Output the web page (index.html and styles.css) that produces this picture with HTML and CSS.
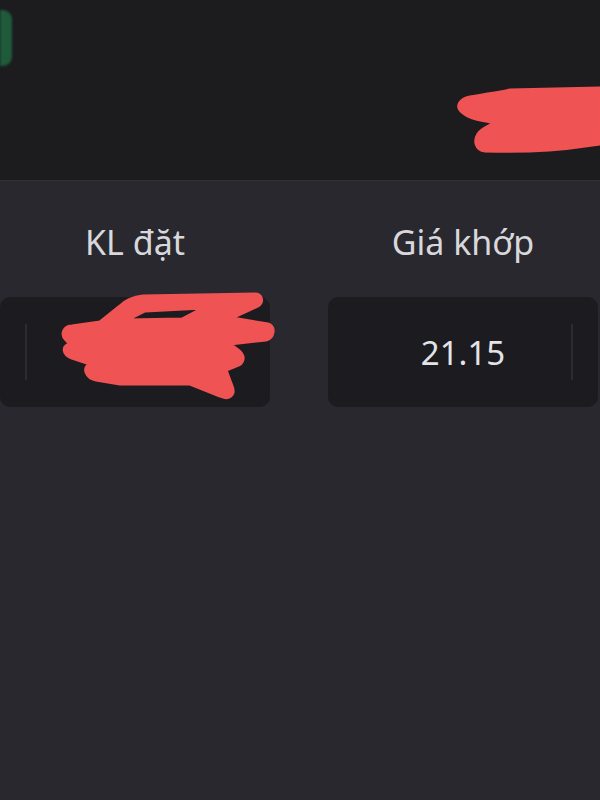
FILE: index.html
```html
<!DOCTYPE html>
<html lang="vi">
<head>
  <meta charset="UTF-8">
  <meta name="viewport" content="width=device-width, initial-scale=1.0">
  <title>Đặt lệnh</title>
  <link rel="stylesheet" href="styles.css">
</head>
<body>
  <div class="top-bar">
    <div class="buy-tab"></div>
    <svg class="scribble scribble-top" viewBox="0 0 600 181" width="600" height="181">
      <path d="M 470 97 C 490 93, 505 92, 510 90 L 600 88 L 600 144 L 585 146 C 560 150, 520 152, 485 151 C 475 150, 474 140, 478 134 C 482 128, 490 126, 494 123 C 485 120, 470 120, 462 112 C 455 106, 460 99, 470 97 Z"/>
    </svg>
  </div>

  <div class="order-panel">
    <div class="field">
      <div class="field-label">KL đặt</div>
      <div class="stepper">
        <div class="stepper-side"></div>
        <div class="stepper-line"></div>
        <div class="stepper-value"></div>
        <div class="stepper-line hidden"></div>
        <div class="stepper-side"></div>
        <svg class="scribble scribble-qty" viewBox="0 0 270 110" width="270" height="110">
          <path fill-rule="evenodd" d="M 143 -1 L 255 -3 C 262 -3, 264 5, 258 9 L 232 21 L 268 27 C 276 30, 274 41, 266 43 L 230 47 L 238 53 C 246 59, 244 67, 236 69 L 226 73 L 232 89 C 236 99, 228 103, 220 99 L 190 87 L 120 87 L 96 83 C 86 81, 82 71, 90 67 L 72 61 C 62 57, 62 49, 70 47 L 66 43 C 60 37, 64 29, 72 29 L 100 25 L 120 9 C 126 3, 134 0, 143 -1 Z M 127 23 L 145 14 L 203 11 L 182 22 Z"/>
        </svg>
      </div>
    </div>
    <div class="field">
      <div class="field-label">Giá khớp</div>
      <div class="stepper">
        <div class="stepper-side"></div>
        <div class="stepper-line hidden"></div>
        <div class="stepper-value">21.15</div>
        <div class="stepper-line"></div>
        <div class="stepper-side"></div>
      </div>
    </div>
  </div>
</body>
</html>
```

FILE: styles.css
```css
body {
  margin: 0;
  font-family: 'Noto Sans', 'Open Sans', sans-serif;
  background: #29282f;
  color: #e6e6ea;
  height: 800px;
  overflow: hidden;
}
.top-bar {
  position: relative;
  box-sizing: border-box;
  height: 181px;
  padding-top: 10px;
  background: #1c1c1f;
  border-bottom: 1px solid #303036;
}
.buy-tab {
  width: 12px;
  height: 56px;
  background: #1f5a3a;
  border-radius: 0 9px 9px 0;
  filter: blur(0.8px);
}
.scribble {
  position: absolute;
  top: 0;
  left: 0;
  overflow: visible;
}
.scribble path {
  fill: #f05353;
  stroke: #f05353;
  stroke-width: 3;
  stroke-linejoin: round;
}
.order-panel {
  display: grid;
  grid-template-columns: 270px 270px;
  column-gap: 58px;
  padding-top: 37px;
}
.field {
  display: flex;
  flex-direction: column;
  align-items: center;
}
.field-label {
  font-size: 34px;
  line-height: 48px;
  color: #d8d8dc;
}
.stepper {
  position: relative;
  margin-top: 31px;
  width: 100%;
  height: 110px;
  display: flex;
  align-items: center;
  background: #1c1c20;
  border-radius: 10px;
}
.stepper-side {
  width: 25px;
}
.stepper-line {
  width: 2px;
  height: 56px;
  background: #2b2b31;
}
.stepper-line.hidden {
  background: transparent;
}
.stepper-value {
  flex: 1;
  text-align: center;
  font-size: 33px;
  color: #e4e4e8;
}
```
